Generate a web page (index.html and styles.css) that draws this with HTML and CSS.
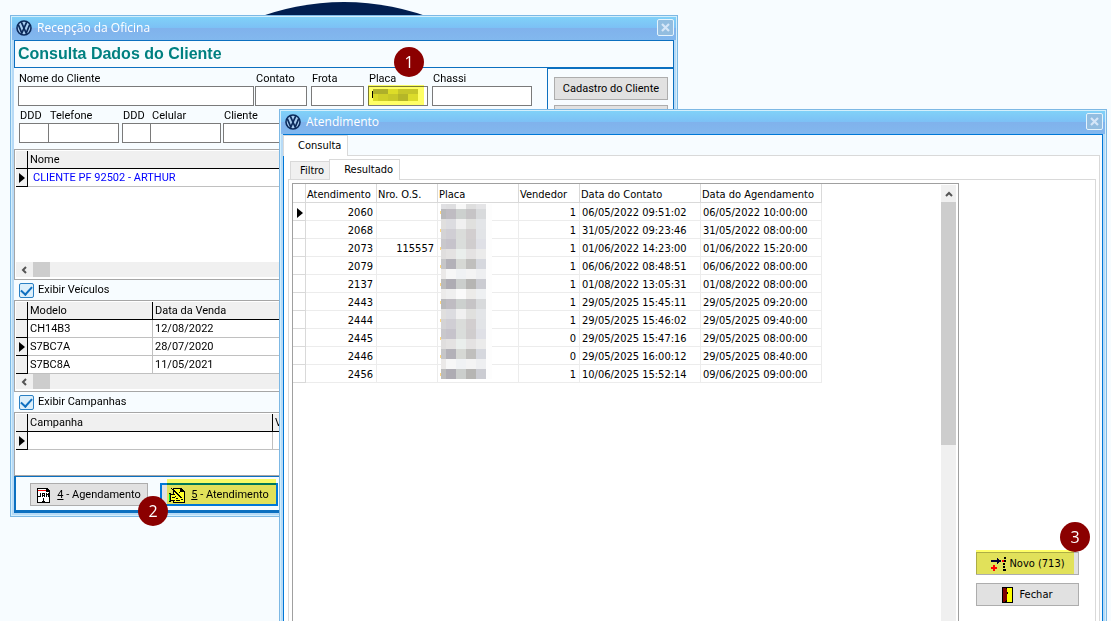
FILE: index.html
```html
<!DOCTYPE html>
<html lang="pt-BR">
<head>
  <meta charset="UTF-8">
  <meta name="viewport" content="width=device-width, initial-scale=1.0">
  <title>Recepção da Oficina</title>
  <link rel="stylesheet" href="styles.css">
</head>
<body>
  <svg class="symbols" width="0" height="0" aria-hidden="true">
    <symbol id="vw" viewBox="0 0 16 16">
      <circle cx="8" cy="8" r="7" fill="#a9cdf0" stroke="#0b2a5b" stroke-width="1.6"/>
      <path d="M5.3 2.2 8 8.2 10.7 2.2M2.4 4.8 5.8 13 8 8.2 10.2 13 13.6 4.8" fill="none" stroke="#0b2a5b" stroke-width="1.7"/>
    </symbol>
    <symbol id="close" viewBox="0 0 9 9">
      <path d="M1 1 8 8M8 1 1 8" fill="none" stroke="#d5e6f8" stroke-width="2.2"/>
    </symbol>
    <symbol id="arrow" viewBox="0 0 6 10">
      <path d="M0 0 6 5 0 10z" fill="#000"/>
    </symbol>
    <symbol id="chevron" viewBox="0 0 8 8">
      <path d="M6 1 3 4 6 7" fill="none" stroke="#555" stroke-width="2"/>
    </symbol>
  </svg>

  <div class="desktop">
    <div class="wallpaper"></div>

    <section class="window recepcao">
      <header class="titlebar">
        <svg class="logo"><use href="#vw"/></svg>
        <span>Recepção da Oficina</span>
        <button class="close" aria-label="Fechar janela"><svg><use href="#close"/></svg></button>
      </header>

      <h1 class="heading">Consulta Dados do Cliente</h1>

      <div class="columns">
        <div class="main">
          <form class="search">
            <div class="line line-client">
              <div class="field"><label for="nome">Nome do Cliente</label><input type="text" id="nome"></div>
              <div class="field"><label for="contato">Contato</label><input type="text" id="contato"></div>
              <div class="field"><label for="frota">Frota</label><input type="text" id="frota"></div>
              <div class="field placa">
                <label for="placa">Placa</label><input type="text" id="placa">
                <svg class="mask-placa" viewBox="0 0 47 12" shape-rendering="crispEdges">
                  <path d="M0 2h1v7h-1z" fill="#000"/>
                  <path d="M1 0h15v5h-15z" fill="#aeaf67"/><path d="M16 0h10v5h-10z" fill="#dddd63"/><path d="M26 0h20v5h-20z" fill="#c6c665"/>
                  <path d="M1 5h5v7h-5z" fill="#dada64"/><path d="M6 5h10v7h-10z" fill="#cfcf63"/><path d="M16 5h10v7h-10z" fill="#c7c864"/><path d="M26 5h10v7h-10z" fill="#b5b663"/><path d="M36 5h10v7h-10z" fill="#dcdc68"/>
                </svg>
                <span class="highlight"></span>
                <span class="badge">1</span>
              </div>
              <div class="field"><label for="chassi">Chassi</label><input type="text" id="chassi"></div>
            </div>
            <div class="line line-phone">
              <div class="field"><label for="ddd1">DDD</label><input type="text" id="ddd1"></div>
              <div class="field joined"><label for="telefone">Telefone</label><input type="text" id="telefone"></div>
              <div class="field"><label for="ddd2">DDD</label><input type="text" id="ddd2"></div>
              <div class="field joined"><label for="celular">Celular</label><input type="text" id="celular"></div>
              <div class="field"><label for="cliente">Cliente</label><input type="text" id="cliente"></div>
            </div>
          </form>

          <div class="grid grid-clientes">
            <table>
              <colgroup><col class="col-mark"><col></colgroup>
              <thead><tr><th></th><th>Nome</th></tr></thead>
              <tbody>
                <tr class="selected"><td><svg class="mark"><use href="#arrow"/></svg></td><td>CLIENTE PF 92502 - ARTHUR</td></tr>
              </tbody>
            </table>
            <div class="hscroll"><svg><use href="#chevron"/></svg><span class="thumb"></span></div>
          </div>

          <label class="check"><input type="checkbox" checked>Exibir Veículos</label>

          <div class="grid grid-veiculos">
            <table>
              <colgroup><col class="col-mark"><col class="col-modelo"><col></colgroup>
              <thead><tr><th></th><th>Modelo</th><th>Data da Venda</th></tr></thead>
              <tbody>
                <tr><td></td><td>CH14B3</td><td>12/08/2022</td></tr>
                <tr><td><svg class="mark"><use href="#arrow"/></svg></td><td>S7BC7A</td><td>28/07/2020</td></tr>
                <tr><td></td><td>S7BC8A</td><td>11/05/2021</td></tr>
              </tbody>
            </table>
            <div class="hscroll"><svg><use href="#chevron"/></svg><span class="thumb"></span></div>
          </div>

          <label class="check"><input type="checkbox" checked>Exibir Campanhas</label>

          <div class="grid grid-campanhas">
            <table>
              <colgroup><col class="col-mark"><col class="col-campanha"><col></colgroup>
              <thead><tr><th></th><th>Campanha</th><th>V</th></tr></thead>
              <tbody>
                <tr><td><svg class="mark"><use href="#arrow"/></svg></td><td></td><td></td></tr>
              </tbody>
            </table>
          </div>
        </div>

        <aside class="side">
          <button class="btn">Cadastro do Cliente</button>
          <button class="btn" aria-label="Cadastro"></button>
        </aside>
      </div>

      <footer class="actions">
        <button class="btn">
          <svg class="icon" viewBox="0 0 14 16" shape-rendering="crispEdges">
            <path d="M0 1h10l3 3v12h-13z" fill="#000"/>
            <path d="M1 2h8v3h3v10h-11z" fill="#fff"/>
            <path d="M1 3h8v1h-8z" fill="#f00"/>
            <path d="M3 6h1v4h-3v-1h2zM5 6h3v4h-1v-1h-1v1h-1zM6 7h1v1h-1zM9 6h1v1h1v-1h1v4h-1v-2h-1v2h-1zM6 11h1v3h1v1h-3v-1h1v-2h-1z" fill="#000" fill-rule="evenodd"/>
          </svg>
          <span><u>4</u> - Agendamento</span>
          <span class="badge">2</span>
        </button>
        <button class="btn active">
          <svg class="icon wide" viewBox="0 0 16 16" shape-rendering="crispEdges">
            <path d="M4 1h8l4 4v11h-12z" fill="#000"/>
            <path d="M5 2h6v3h4v10h-10z" fill="#ff6"/>
            <path d="M0 6h2v1h4v7h-4v1h-2z" fill="#000"/>
            <path d="M0 7h1v7h-1z" fill="#0e6"/>
            <path d="M2 8h4v5h-4z" fill="#ff6"/>
            <path d="M2 1h1v1h-1zM3 2h1v1h-1zM4 3h2v1h-2zM5 4h2v1h-2zM6 5h2v1h-2zM7 6h2v1h-2zM8 7h2v1h-2zM9 8h2v1h-2zM10 9h2v1h-2zM11 10h2v1h-2zM13 2h1v1h-1zM12 3h1v1h-1zM11 4h1v1h-1zM10 5h1v1h-1zM6 9h1v1h-1zM7 13h4v1h-4zM12 12h2v1h-2zM7 11h2v1h-2zM3 10h3v1h-3z" fill="#000"/>
          </svg>
          <span><u>5</u> - Atendimento</span>
          <span class="highlight"></span>
        </button>
      </footer>
    </section>

    <section class="window atendimento">
      <header class="titlebar">
        <svg class="logo"><use href="#vw"/></svg>
        <span>Atendimento</span>
        <button class="close" aria-label="Fechar janela"><svg><use href="#close"/></svg></button>
      </header>

      <div class="body">
        <div class="tabs" role="tablist">
          <button class="tab current" role="tab" aria-selected="true">Consulta</button>
        </div>
        <div class="page">
          <div class="tabs inner" role="tablist">
            <button class="tab" role="tab">Filtro</button>
            <button class="tab current" role="tab" aria-selected="true">Resultado</button>
          </div>
          <div class="page result">
            <div class="list">
              <div class="rows">
                <table>
                  <colgroup>
                    <col class="c-mark"><col class="c-atend"><col class="c-os"><col class="c-placa">
                    <col class="c-vend"><col class="c-data"><col class="c-data">
                  </colgroup>
                  <thead>
                    <tr><th></th><th>Atendimento</th><th>Nro. O.S.</th><th>Placa</th><th>Vendedor</th><th>Data do Contato</th><th>Data do Agendamento</th></tr>
                  </thead>
                  <tbody>
                    <tr><td><svg class="mark"><use href="#arrow"/></svg></td><td class="num">2060</td><td class="num"></td><td></td><td class="num">1</td><td>06/05/2022 09:51:02</td><td>06/05/2022 10:00:00</td></tr>
                    <tr><td></td><td class="num">2068</td><td class="num"></td><td></td><td class="num">1</td><td>31/05/2022 09:23:46</td><td>31/05/2022 08:00:00</td></tr>
                    <tr><td></td><td class="num">2073</td><td class="num">115557</td><td></td><td class="num">1</td><td>01/06/2022 14:23:00</td><td>01/06/2022 15:20:00</td></tr>
                    <tr><td></td><td class="num">2079</td><td class="num"></td><td></td><td class="num">1</td><td>06/06/2022 08:48:51</td><td>06/06/2022 08:00:00</td></tr>
                    <tr><td></td><td class="num">2137</td><td class="num"></td><td></td><td class="num">1</td><td>01/08/2022 13:05:31</td><td>01/08/2022 08:00:00</td></tr>
                    <tr><td></td><td class="num">2443</td><td class="num"></td><td></td><td class="num">1</td><td>29/05/2025 15:45:11</td><td>29/05/2025 09:20:00</td></tr>
                    <tr><td></td><td class="num">2444</td><td class="num"></td><td></td><td class="num">1</td><td>29/05/2025 15:46:02</td><td>29/05/2025 09:40:00</td></tr>
                    <tr><td></td><td class="num">2445</td><td class="num"></td><td></td><td class="num">0</td><td>29/05/2025 15:47:16</td><td>29/05/2025 08:00:00</td></tr>
                    <tr><td></td><td class="num">2446</td><td class="num"></td><td></td><td class="num">0</td><td>29/05/2025 16:00:12</td><td>29/05/2025 08:40:00</td></tr>
                    <tr><td></td><td class="num">2456</td><td class="num"></td><td></td><td class="num">1</td><td>10/06/2025 15:52:14</td><td>09/06/2025 09:00:00</td></tr>
                  </tbody>
                </table>
                <!-- plates are pixelated -->
                <svg class="mask-list" viewBox="0 0 52 175" shape-rendering="crispEdges">
                  <path d="M1 0h51v175h-51z" fill="#fdfdfd"/>
                  <path d="M0 7h1v3h-1zM0 25h1v3h-1zM0 43h1v3h-1zM0 61h1v3h-1zM0 79h1v3h-1zM0 97h1v3h-1zM0 115h1v3h-1zM0 133h1v3h-1zM0 151h1v3h-1zM0 169h1v3h-1z" fill="#ffd880"/>
                  <path d="M1 0h5v5h-5z" fill="#e0e0e3"/><path d="M6 0h10v5h-10z" fill="#dedee0"/><path d="M16 0h10v5h-10z" fill="#f8f8f8"/><path d="M26 0h10v5h-10z" fill="#dedede"/><path d="M36 0h10v5h-10z" fill="#e4e4e6"/>
                  <g id="mosaic">
                    <path d="M1 5h5v10h-5z" fill="#b9b9bb"/><path d="M6 5h10v10h-10z" fill="#bfbcc2"/><path d="M16 5h10v10h-10z" fill="#ccd0ce"/><path d="M26 5h10v10h-10z" fill="#c6c4c6"/><path d="M36 5h10v10h-10z" fill="#d8dadc"/>
                    <path d="M1 15h5v10h-5z" fill="#e0dfde"/><path d="M6 15h10v10h-10z" fill="#dcdce0"/><path d="M16 15h10v10h-10z" fill="#f0f0f0"/><path d="M26 15h10v10h-10z" fill="#e0e0de"/><path d="M36 15h10v10h-10z" fill="#e3e5e8"/>
                    <path d="M1 25h5v10h-5z" fill="#d4d3d5"/><path d="M6 25h10v10h-10z" fill="#d0ced4"/><path d="M16 25h10v10h-10z" fill="#dadcda"/><path d="M26 25h10v10h-10z" fill="#d2cecf"/><path d="M36 25h10v10h-10z" fill="#e2e4e7"/>
                    <path d="M1 35h5v10h-5z" fill="#c9c8cc"/><path d="M6 35h10v10h-10z" fill="#c6c3cb"/><path d="M16 35h10v10h-10z" fill="#dadddb"/><path d="M26 35h10v10h-10z" fill="#d0cdce"/><path d="M36 35h10v10h-10z" fill="#dfe0e6"/>
                    <path d="M1 45h5v10h-5z" fill="#e0dede"/><path d="M6 45h10v10h-10z" fill="#e4e2e2"/><path d="M16 45h10v10h-10z" fill="#eaeeec"/><path d="M26 45h10v10h-10z" fill="#e4e2e2"/><path d="M36 45h10v10h-10z" fill="#ebebeb"/>
                    <path d="M1 55h5v10h-5z" fill="#c6c6c8"/><path d="M6 55h10v10h-10z" fill="#b3b1b8"/><path d="M16 55h10v10h-10z" fill="#d6d8d4"/><path d="M26 55h10v10h-10z" fill="#c0bfbd"/><path d="M36 55h10v10h-10z" fill="#d6d8de"/>
                    <path d="M1 65h5v10h-5z" fill="#ebe9e8"/><path d="M6 65h10v10h-10z" fill="#f7f7f7"/><path d="M16 65h10v10h-10z" fill="#f0f2f4"/><path d="M26 65h10v10h-10z" fill="#f4f4f4"/><path d="M36 65h10v10h-10z" fill="#eeeff1"/>
                    <path d="M1 75h5v10h-5z" fill="#bcbcbc"/><path d="M6 75h10v10h-10z" fill="#aeacb3"/><path d="M16 75h10v10h-10z" fill="#cbcecc"/><path d="M26 75h10v10h-10z" fill="#b6b5b3"/><path d="M36 75h10v10h-10z" fill="#cbccd2"/>
                    <path d="M1 85h5v10h-5z" fill="#ecebea"/><path d="M6 85h10v10h-10z" fill="#efefef"/><path d="M16 85h10v10h-10z" fill="#fafafa"/><path d="M26 85h10v10h-10z" fill="#ecebe9"/><path d="M36 85h10v10h-10z" fill="#eef0f2"/>
                  </g>
                  <use href="#mosaic" y="90"/>
                </svg>
              </div>
              <div class="vscroll"><svg><use href="#chevron"/></svg><span class="thumb"></span></div>
            </div>

            <div class="commands">
              <button class="btn">
                <svg class="icon wide" viewBox="0 0 16 16" shape-rendering="crispEdges">
                  <path d="M1 4h6v-2h1v1h1v1h2v2h-2v1h-1v1h-1v-2h-6z" fill="#000080"/>
                  <path d="M3 9h2v2h2v2h-2v2h-2v-2h-2v-2h2zM12 4h2v2h-2z" fill="#f00"/>
                  <path d="M14 1h2v2h-2zM14 4h2v2h-2zM13 7h2v2h-2zM13 10h2v2h-2zM13 13h3v2h-3z" fill="#000"/>
                </svg>
                <span>Novo (713)</span>
                <span class="highlight"></span>
                <span class="badge">3</span>
              </button>
              <button class="btn">
                <svg class="icon door" viewBox="0 0 11 16" shape-rendering="crispEdges">
                  <path d="M0 0h11v16h-11z" fill="#000"/>
                  <path d="M5 1h5v14h-5z" fill="#ff0"/>
                  <path d="M1 1h3v1h1v11h-1v1h-1v1h-2z" fill="#800000"/>
                  <path d="M5 5h1v2h-1z" fill="#000"/>
                </svg>
                <span>Fechar</span>
              </button>
            </div>
          </div>
        </div>
      </div>
    </section>
  </div>
</body>
</html>
```

FILE: styles.css
```css
* {
  box-sizing: border-box;
}
body {
  margin: 0;
  font-family: Roboto, "Liberation Sans", sans-serif;
  font-size: 11px;
  line-height: 14px;
  color: #000;
}
button, input {
  font: inherit;
  color: inherit;
}
.symbols {
  position: absolute;
}
.desktop {
  position: relative;
  height: 100vh;
  overflow: hidden;
  background: #f7fcff;
}
.wallpaper {
  position: absolute;
  left: 98px;
  top: 2px;
  width: 492px;
  height: 492px;
  border-radius: 50%;
  background: #001e50;
}

/* windows */
.window {
  position: absolute;
  display: flex;
  flex-direction: column;
  padding: 0 3px 3px;
  border: 1px solid #7db8e4;
  background: #b7daf6;
  box-shadow: inset 0 0 0 1px #d3effc;
}
.recepcao {
  left: 10px;
  top: 15px;
  width: 668px;
}
.atendimento {
  left: 279px;
  right: 4px;
  top: 109px;
  bottom: -20px;
  font-family: "DejaVu Sans Condensed", Tahoma, sans-serif;
}
.titlebar {
  display: flex;
  align-items: center;
  gap: 5px;
  height: 24px;
  margin: 0 -2px;
  padding: 0 2px 2px 4px;
  border-top: 1px solid #d3effc;
  background: linear-gradient(#80d1f8, #7cc0f5 48%, #80b2ec 50%, #82b8ee);
  color: #fff;
  font-family: "Open Sans", "Noto Sans", sans-serif;
  font-size: 12px;
}
.logo {
  width: 16px;
  height: 16px;
}
.close {
  display: flex;
  align-items: center;
  justify-content: center;
  width: 17px;
  height: 17px;
  margin-left: auto;
  padding: 0;
  border: 1px solid #e4f3fc;
  border-radius: 2px;
  background: #92bde0;
}
.close svg {
  width: 9px;
  height: 9px;
}

/* shared controls */
.btn {
  position: relative;
  display: flex;
  align-items: center;
  justify-content: center;
  gap: 6px;
  height: 23px;
  padding: 0;
  border: 1px solid #adadad;
  background: #e1e1e1;
  white-space: nowrap;
}
.icon {
  width: 14px;
  height: 16px;
}
.icon.wide {
  width: 16px;
}
.icon.door {
  width: 11px;
}
.highlight {
  position: absolute;
  background: #ffff66;
  mix-blend-mode: multiply;
}
.badge {
  position: absolute;
  z-index: 1;
  width: 30px;
  height: 30px;
  border-radius: 50%;
  background: #8b0000;
  color: #fff;
  font-family: "Open Sans", sans-serif;
  font-size: 16px;
  line-height: 30px;
  text-align: center;
}
table {
  border-spacing: 0;
  table-layout: fixed;
}
th, td {
  height: 18px;
  padding: 0 2px;
  font-weight: normal;
  text-align: left;
  white-space: nowrap;
  overflow: hidden;
}
.mark {
  display: block;
  width: 6px;
  height: 10px;
  margin-left: 1px;
}

/* customer window */
.heading {
  height: 28px;
  margin: 0;
  padding: 0 3px;
  border: 1px solid #0c70c0;
  background: #f7fcff;
  color: #008080;
  font-family: "Liberation Sans", Arial, sans-serif;
  font-size: 16px;
  line-height: 25px;
}
.columns {
  display: flex;
  background: #f7fcff;
}
.main {
  flex: 1;
  min-width: 0;
}
.side {
  display: flex;
  flex-direction: column;
  gap: 5px;
  width: 127px;
  padding: 8px 5px 0 6px;
  border: 1px solid #0c70c0;
  border-bottom: 0;
}
.search {
  height: 81px;
  padding: 4px 4px 0;
}
.line {
  display: grid;
}
.line-client {
  grid-template-columns: 237px 56px 57px 64px 104px;
}
.line-phone {
  grid-template-columns: 30px 73px 29px 72px 100px;
  margin-top: 3px;
  padding-left: 1px;
}
.field {
  position: relative;
  display: flex;
  flex-direction: column;
}
.field label {
  padding-left: 1px;
}
.field input {
  width: calc(100% - 4px);
  height: 20px;
  padding: 0 3px;
  border: 1px solid #7a7a7a;
  background: #fff;
}
.line-client .field:first-child input {
  width: calc(100% - 1px);
}
.line-phone .field:nth-child(odd) input {
  width: 100%;
}
.line-phone .joined input {
  width: 71px;
  margin-left: -1px;
}
.placa .highlight {
  left: 0;
  top: 13px;
  width: 56px;
  height: 20px;
}
.placa .badge {
  left: 26px;
  top: -25px;
}
.mask-placa {
  position: absolute;
  left: 4px;
  top: 17px;
  width: 47px;
  height: 12px;
}
.grid {
  display: flex;
  flex-direction: column;
  padding: 1px;
  border: 1px solid #a6a6a6;
  background: #fff;
}
.grid-clientes {
  height: 131px;
}
.grid-veiculos {
  height: 92px;
}
.grid-campanhas {
  height: 64px;
}
.grid table {
  width: 100%;
}
.col-mark {
  width: 12px;
}
.col-modelo {
  width: 125px;
}
.col-campanha {
  width: 245px;
}
.grid th {
  border-right: 1px solid #000;
  border-bottom: 1px solid #000;
  background: #f0f0f0;
}
.grid td {
  border-right: 1px solid #c0c0c0;
  border-bottom: 1px solid #c0c0c0;
}
.grid td:first-child {
  border-right-color: #000;
  border-bottom-color: #000;
  background: #f0f0f0;
}
.grid .selected td {
  padding-left: 5px;
  color: #0000ff;
}
.grid .selected td:first-child {
  padding-left: 2px;
}
.hscroll {
  display: flex;
  align-items: center;
  height: 15px;
  margin: auto 0 1px;
  padding-left: 4px;
  background: #f0f0f0;
}
.grid-veiculos table {
  margin-bottom: -1px;
}
.hscroll svg, .vscroll svg {
  width: 8px;
  height: 8px;
}
.hscroll .thumb {
  width: 17px;
  height: 15px;
  margin-left: 5px;
  background: #cdcdcd;
}
.check {
  display: flex;
  align-items: center;
  gap: 4px;
  height: 20px;
  padding-left: 5px;
}
.check input {
  appearance: none;
  display: flex;
  justify-content: center;
  width: 15px;
  height: 15px;
  margin: 0;
  border: 1px solid #2a80c4;
  border-radius: 2px;
  background: #dceffb;
}
.check input:checked::after {
  content: "";
  width: 5px;
  height: 9px;
  border: solid #1070c0;
  border-width: 0 2px 2px 0;
  transform: rotate(42deg);
}
.actions {
  display: flex;
  gap: 12px;
  height: 37px;
  padding: 6px 0 0 14px;
  border: solid #0c70c0;
  border-width: 1px 2px 3px;
  background: #f7fcff;
}
.actions .btn {
  width: 118px;
}
.actions .active {
  border: 2px solid #0078d7;
}
.actions .badge {
  left: 107px;
  top: 12px;
}
.actions .highlight {
  left: 5px;
  top: -6px;
  width: 109px;
  height: 25px;
}

/* service window */
.body {
  display: flex;
  flex: 1;
  flex-direction: column;
  padding-right: 2px;
  border: 1px solid #0078d7;
  background: #f7fcff;
}
.tabs {
  display: flex;
  align-items: flex-end;
}
.tab {
  height: 18px;
  padding: 1px 5px 0 9px;
  border: 1px solid #d9d9d9;
  border-bottom: 0;
  background: #f0f0f0;
}
.tab.current {
  position: relative;
  z-index: 1;
  height: 21px;
  margin: 0 0 -1px -1px;
  padding: 0 6px 1px 14px;
  background: #fff;
}
.page {
  display: flex;
  flex: 1;
  flex-direction: column;
  padding: 3px 3px 0 4px;
  border: 1px solid #d9d9d9;
  border-width: 1px 1px 0 0;
  background: #fff;
}
.inner {
  padding-left: 2px;
}
.result {
  flex-direction: row;
  padding: 3px 0 0 3px;
  border-width: 1px 1px 0;
}
.list {
  display: flex;
  flex: 1;
  padding-right: 2px;
  border: 1px solid #a0a0a0;
}
.rows {
  position: relative;
  flex: 1;
}
.rows table {
  width: 529px;
}
.c-mark {
  width: 13px;
}
.c-atend {
  width: 71px;
}
.c-os, .c-vend {
  width: 61px;
}
.c-placa {
  width: 81px;
}
.c-data {
  width: 121px;
}
.rows th {
  height: 19px;
  padding: 4px 1px 0;
  border: solid #d9d9d9;
  border-width: 0 1px 1px 0;
}
.rows td {
  padding: 2px 2px 0;
  border: solid #ececec;
  border-width: 0 1px 1px 0;
}
.rows td:first-child {
  padding-left: 3px;
  border-color: #d9d9d9;
}
.rows .num {
  padding-right: 3px;
  text-align: right;
}
.mask-list {
  position: absolute;
  left: 147px;
  top: 20px;
  width: 52px;
  height: 175px;
}
.vscroll {
  display: flex;
  flex-direction: column;
  align-items: center;
  width: 15px;
  margin-top: 1px;
  padding-top: 5px;
  background: #f0f0f0;
}
.vscroll svg {
  transform: rotate(90deg);
}
.vscroll .thumb {
  width: 15px;
  height: 243px;
  margin-top: 4px;
  background: #cdcdcd;
}
.commands {
  display: flex;
  flex-direction: column;
  justify-content: flex-end;
  gap: 8px;
  width: 136px;
  padding: 0 16px 30px 17px;
}
.commands .btn {
  gap: 3px;
}
.commands .btn:last-child {
  gap: 6px;
}
.commands .highlight {
  left: -1px;
  top: -3px;
  width: 98px;
  height: 24px;
}
.commands .badge {
  left: 83px;
  top: -31px;
}
```
